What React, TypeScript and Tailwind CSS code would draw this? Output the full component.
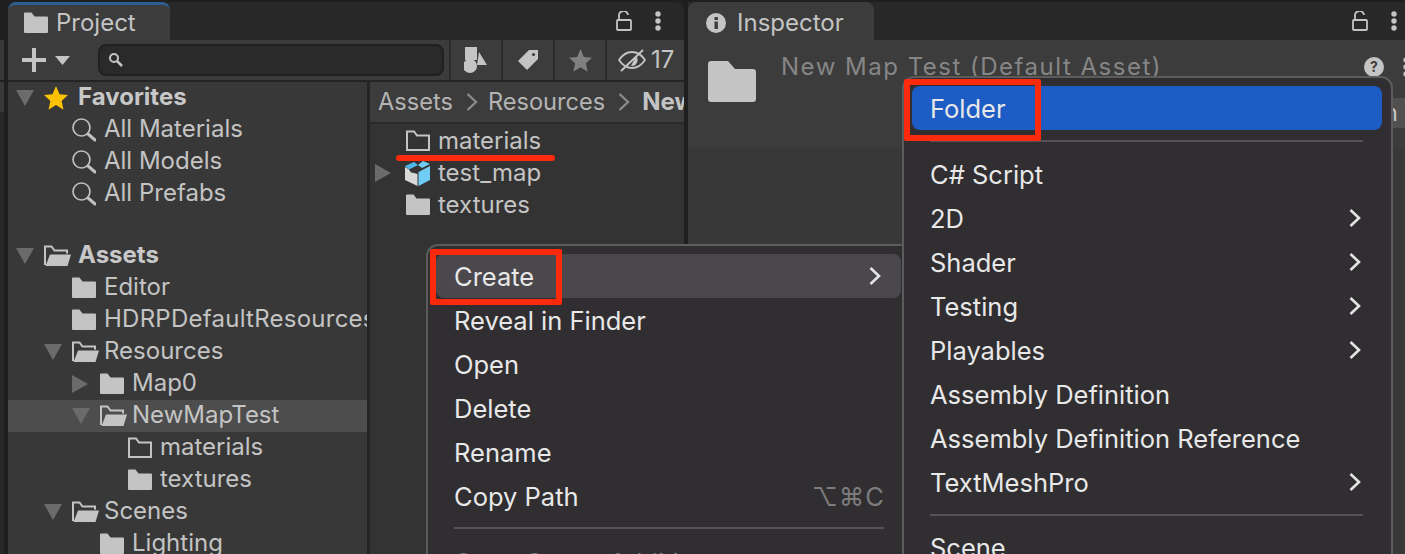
import React from "react";

function Folder({ size = 24 }: { size?: number }) {
  return (
    <svg width={size} height={size} viewBox="0 0 24 24" className="shrink-0">
      <path d="M0 2.500a1 1 0 0 1 1-1h6.500l3 4H23a1 1 0 0 1 1 1V21a1 1 0 0 1-1 1H1a1 1 0 0 1-1-1z" fill="#c4c4c4" />
    </svg>
  );
}
function FolderEmpty() {
  return (
    <svg width="24" height="24" viewBox="0 0 24 24" className="shrink-0">
      <path d="M1 21V2.500h7l3 4h12V21z" fill="none" stroke="#c4c4c4" strokeWidth="2" />
    </svg>
  );
}
function FolderOpen() {
  return (
    <svg width="27" height="24" viewBox="0 0 27 24" className="shrink-0">
      <path d="M1 21V2.500h6.500l3 4H23v3" fill="none" stroke="#c4c4c4" strokeWidth="2" />
      <path d="M1.500 22 6 10.500h21L23.500 22z" fill="#c4c4c4" />
    </svg>
  );
}
function TriDown() {
  return (
    <svg width="18" height="16" viewBox="0 0 18 16" className="shrink-0">
      <path d="M0 0h18L9 16z" fill="#6b6b6b" />
    </svg>
  );
}
function TriRight() {
  return (
    <svg width="16" height="18" viewBox="0 0 16 18" className="shrink-0">
      <path d="M0 0l16 9-16 9z" fill="#6b6b6b" />
    </svg>
  );
}
function Mag() {
  return (
    <svg width="24" height="24" viewBox="0 0 24 24" className="shrink-0">
      <circle cx="9.500" cy="9.500" r="8.500" fill="none" stroke="#c0c0c0" strokeWidth="1.700" />
      <path d="M16 16l7 6" stroke="#c0c0c0" strokeWidth="3" strokeLinecap="round" />
    </svg>
  );
}
function Star({ c, size }: { c: string; size: number }) {
  return (
    <svg width={size} height={size} viewBox="0 0 24 24" className="shrink-0">
      <path d="M12 0l3.500 8.300 8.500.8-6.400 5.800 1.900 8.800L12 19.100l-7.500 4.600 1.900-8.800L0 9.100l8.500-.8z" fill={c} />
    </svg>
  );
}
function Lock() {
  return (
    <svg width="16" height="20" viewBox="0 0 16 20">
      <path d="M3 8V5a4.500 4.500 0 0 1 9-1" fill="none" stroke="#c4c4c4" strokeWidth="1.800" />
      <rect x="1" y="9" width="14" height="10" rx="1" fill="none" stroke="#c4c4c4" strokeWidth="1.800" />
    </svg>
  );
}
function Dots() {
  return (
    <svg width="6" height="20" viewBox="0 0 6 20" className="shrink-0">
      <circle cx="3" cy="3" r="2.700" fill="#c4c4c4" />
      <circle cx="3" cy="10" r="2.700" fill="#c4c4c4" />
      <circle cx="3" cy="17" r="2.700" fill="#c4c4c4" />
    </svg>
  );
}
function Chevron() {
  return (
    <svg width="12" height="20" viewBox="0 0 12 20" className="shrink-0">
      <path d="M1.500 2l8.500 8-8.500 8" fill="none" stroke="#e4e4e4" strokeWidth="2.600" />
    </svg>
  );
}
function Crumb() {
  return (
    <svg width="12" height="20" viewBox="0 0 12 20" className="shrink-0 ml-[13px] mr-[10px]">
      <path d="M1.500 2l8.500 8-8.500 8" fill="none" stroke="#8a8a8a" strokeWidth="2.400" />
    </svg>
  );
}
function Box() {
  return (
    <svg width="27" height="26" viewBox="0 0 27 26" className="shrink-0">
      <path d="M1 6l9-4 4 3-9 4.500z" fill="#4fb6e8" />
      <path d="M14 5l5-4 7 3-8 4z" fill="#6fcdf5" />
      <path d="M1 7l4 2.500 2 3 3 .5 3.500 1V26L1 20z" fill="#d8d8d8" />
      <path d="M14.500 12l11.500-6v14l-11.500 6z" fill="#6fcdf5" />
    </svg>
  );
}

type R = { indent: number; tri?: "d" | "r"; icon: "f" | "e" | "o" | "m" | "s"; label: string; bold?: boolean; sel?: boolean; wide?: boolean };

function Row({ indent, tri, icon, label, bold, sel, wide }: R) {
  return (
    <div className={`flex h-8 items-center shrink-0 ${sel ? "bg-[#4d4d4d]" : ""}`} style={{ paddingLeft: indent }}>
      <div className="w-7 flex justify-start items-center shrink-0">
        {tri === "d" && <TriDown />}
        {tri === "r" && <TriRight />}
      </div>
      <div className={`flex items-center shrink-0 ${bold ? "w-[34px]" : "w-[32px]"}`}>
        {icon === "f" && <Folder />}
        {icon === "e" && <FolderEmpty />}
        {icon === "o" && <FolderOpen />}
        {icon === "m" && <Mag />}
        {icon === "s" && <Star c="#ffc107" size={24} />}
      </div>
      <span className={`whitespace-nowrap text-[24px] leading-8 pb-[2px] ${wide ? "tracking-[0.25px]" : ""} ${bold ? "font-bold text-[#c8c8c8]" : "text-[#c4c4c4]"}`}>{label}</span>
    </div>
  );
}

const tree: (R | null)[] = [
  { indent: 8, tri: "d", icon: "s", label: "Favorites", bold: true },
  { indent: 36, icon: "m", label: "All Materials" },
  { indent: 36, icon: "m", label: "All Models" },
  { indent: 36, icon: "m", label: "All Prefabs" },
  null,
  { indent: 8, tri: "d", icon: "o", label: "Assets", bold: true },
  { indent: 36, icon: "f", label: "Editor" },
  { indent: 36, icon: "f", label: "HDRPDefaultResources", wide: true },
  { indent: 36, tri: "d", icon: "o", label: "Resources" },
  { indent: 64, tri: "r", icon: "f", label: "Map0" },
  { indent: 64, tri: "d", icon: "o", label: "NewMapTest", sel: true },
  { indent: 92, icon: "e", label: "materials" },
  { indent: 92, icon: "f", label: "textures" },
  { indent: 36, tri: "d", icon: "o", label: "Scenes" },
  { indent: 64, icon: "f", label: "Lighting" },
];

function MenuItem({ label, arrow, hint, cls = "" }: { label: string; arrow?: boolean; hint?: string; cls?: string }) {
  return (
    <div className={`flex h-11 items-center justify-between rounded-lg ml-[8px] shrink-0 ${cls}`}>
      <span className="whitespace-nowrap text-[25.500px] text-[#e8e8e8] leading-none pt-[2px]">{label}</span>
      {arrow && <Chevron />}
      {hint && <span className="text-[25.500px] text-[#7c7c7c] leading-none tracking-[1px] pt-[2px]">{hint}</span>}
    </div>
  );
}

export default function App() {
  return (
    <div className="relative w-[1405px] h-[554px] overflow-hidden bg-[#1f1f1f] font-['Inter',sans-serif]">
      <div className="flex h-full pt-[2px]">
        <div className="w-[4px] shrink-0 flex flex-col mr-[4px]">
          <div className="h-[38px]" />
          <div className="h-[40px] bg-[#383838]" />
          <div className="h-[2px]" />
          <div className="h-[30px] bg-[#383838]" />
          <div className="flex-1 bg-[#282828]" />
        </div>
        {/* Project panel */}
        <div className="w-[676px] shrink-0 flex flex-col">
          <div className="h-[38px] bg-[#282828] flex items-stretch shrink-0 rounded-t-lg">
            <div className="w-[162px] bg-[#3c3c3c] border-t-[3px] border-[#2d5f93] rounded-t-lg flex items-center pl-4 gap-2">
              <Folder />
              <span className="text-[24px] text-[#c4c4c4]">Project</span>
            </div>
            <div className="ml-auto flex items-center gap-[23px] pr-[23px]">
              <Lock />
              <Dots />
            </div>
          </div>
          <div className="h-[40px] bg-[#3c3c3c] flex items-center shrink-0">
            <div className="w-[90px] flex items-center pl-[14px] gap-[9px] shrink-0">
              <svg width="24" height="24" viewBox="0 0 24 24"><path d="M10 0h4v10h10v4H14v10h-4V14H0v-4h10z" fill="#c4c4c4" /></svg>
              <svg width="15" height="9" viewBox="0 0 15 9"><path d="M0 0h15L7.500 9z" fill="#c4c4c4" /></svg>
            </div>
            <div className="w-[346px] h-8 rounded-lg bg-[#2a2a2a] border-2 border-[#212121] flex items-center pl-2 shrink-0">
              <svg width="16" height="16" viewBox="0 0 16 16"><circle cx="6" cy="6" r="4" fill="none" stroke="#c4c4c4" strokeWidth="2" /><path d="M9 9l5 5" stroke="#c4c4c4" strokeWidth="2.500" /></svg>
            </div>
            <div className="ml-[5px] w-[2px] h-full bg-[#2c2c2c] shrink-0" />
            <div className="w-[50px] h-full flex items-center justify-center shrink-0">
              <svg width="24" height="26" viewBox="0 0 24 26"><rect x="1" y="0" width="12" height="13" fill="#c4c4c4" /><circle cx="6" cy="19" r="7" fill="#c4c4c4" /><path d="M15 5l8 13h-10z" fill="#c4c4c4" /></svg>
            </div>
            <div className="w-[2px] h-full bg-[#2c2c2c] shrink-0" />
            <div className="w-[50px] h-full flex items-center justify-center shrink-0">
              <svg width="22" height="22" viewBox="0 0 22 22"><path d="M12 1h9v9L10 21 1 12z" fill="#c4c4c4" /><circle cx="16.500" cy="5.500" r="1.600" fill="#3c3c3c" /></svg>
            </div>
            <div className="w-[2px] h-full bg-[#2c2c2c] shrink-0" />
            <div className="w-[50px] h-full flex items-center justify-center shrink-0">
              <Star c="#808080" size={23} />
            </div>
            <div className="w-[2px] h-full bg-[#2c2c2c] shrink-0" />
            <div className="flex-1 h-full flex items-center pl-[11px] gap-[5px]">
              <svg width="28" height="26" viewBox="0 0 28 26" className="shrink-0">
                <path d="M1 13c4-6 8-8 13-8s9 2 13 8c-4 6-8 8-13 8S5 19 1 13z" fill="none" stroke="#c4c4c4" strokeWidth="1.800" />
                <path d="M18 9a6 6 0 0 1-5 10z" fill="#c4c4c4" />
                <path d="M3 24L25 3" stroke="#c4c4c4" strokeWidth="2" />
              </svg>
              <span className="text-[24px] text-[#c4c4c4] leading-none">17</span>
            </div>
          </div>
          <div className="h-[2px] bg-[#242424] shrink-0" />
          <div className="flex-1 flex min-h-0">
            <div className="w-[359px] shrink-0 bg-[#383838] flex flex-col overflow-hidden">
              {tree.map((t, i) => (t ? <Row key={i} {...t} /> : <div key={i} className="h-[26px] shrink-0 mb-[4px]" />))}
            </div>
            <div className="w-[3px] bg-[#242424] shrink-0" />
            <div className="flex-1 min-w-0 flex flex-col bg-[#333333]">
              <div className="h-10 bg-[#3c3c3c] flex items-center pl-[8px] overflow-hidden shrink-0">
                <span className="text-[23.600px] text-[#b4b4b4]">Assets</span>
                <Crumb />
                <span className="text-[23.600px] text-[#b4b4b4]">Resources</span>
                <Crumb />
                <span className="ml-[2px] text-[24px] font-bold text-[#c4c4c4] whitespace-nowrap">NewMapTest</span>
              </div>
              <div className="h-[2px] bg-[#2a2a2a] shrink-0" />
              <div className="flex flex-col pt-[1px]">
                <div className="flex h-8 items-center pl-[36px] gap-[8px]">
                  <FolderEmpty />
                  <span className="text-[24px] text-[#c4c4c4]">materials</span>
                </div>
                <div className="flex h-8 items-center pl-[5px]">
                  <TriRight />
                  <div className="ml-[13px] w-[34px]"><Box /></div>
                  <span className="text-[24px] text-[#c4c4c4]">test_map</span>
                </div>
                <div className="flex h-8 items-center pl-[36px] gap-[8px]">
                  <Folder />
                  <span className="text-[24px] text-[#c4c4c4]">textures</span>
                </div>
              </div>
            </div>
          </div>
        </div>
        <div className="w-1 shrink-0" />
        {/* Inspector */}
        <div className="flex-1 flex flex-col min-w-0">
          <div className="h-[38px] bg-[#282828] flex items-stretch shrink-0">
            <div className="w-[186px] bg-[#3c3c3c] rounded-t-lg flex items-center pl-[18px] pt-[3px] gap-[11px]">
              <svg width="20" height="20" viewBox="0 0 20 20"><circle cx="10" cy="10" r="10" fill="#c4c4c4" /><rect x="8.500" y="8.500" width="3.400" height="7.500" fill="#3c3c3c" /><rect x="8.500" y="4" width="3.400" height="3" fill="#3c3c3c" /></svg>
              <span className="text-[24px] text-[#c4c4c4]">Inspector</span>
            </div>
            <div className="ml-auto flex items-center gap-[23px] pr-[8px]">
              <Lock />
              <Dots />
            </div>
          </div>
          <div className="h-[108px] bg-[#3c3c3c] flex pl-[20px] pt-[21px] gap-[25px] shrink-0 overflow-hidden">
            <svg width="48" height="41" viewBox="0 0 48 41" className="shrink-0"><path d="M0 3a3 3 0 0 1 3-3h17l7 8h18a3 3 0 0 1 3 3v27a3 3 0 0 1-3 3H3a3 3 0 0 1-3-3z" fill="#c4c4c4" /></svg>
            <div className="flex flex-1 justify-between items-start min-w-0">
              <span className="text-[24px] text-[#868686] tracking-[1.500px] leading-none whitespace-nowrap -mt-[6px]">New Map Test (Default Asset)</span>
              <div className="flex flex-col items-end -mt-[4px] -mr-[4px] shrink-0">
                <div className="flex items-center gap-[19px]">
                  <svg width="20" height="20" viewBox="0 0 20 20"><circle cx="10" cy="10" r="10" fill="#c4c4c4" /><text x="10" y="15" textAnchor="middle" fontSize="14" fontWeight="700" fill="#3c3c3c" fontFamily="Inter">?</text></svg>
                  <Dots />
                </div>
                <div className="mt-[21px] h-[30px] w-[80px] rounded-l bg-[#505050] flex items-center justify-end pr-[11px]">
                  <span className="text-[24px] text-[#c4c4c4] leading-none">Open</span>
                </div>
              </div>
            </div>
          </div>
          <div className="flex-1 bg-[#383838]" />
        </div>
      </div>

      {/* Create context menu */}
      <div className="absolute left-[426px] top-[244px] w-[488px] h-[330px] rounded-t-xl bg-[#302e31] border-2 border-[#5c5c5c] flex flex-col pt-[8px] overflow-hidden">
        <MenuItem label="Create" arrow cls="bg-[#4a484c] pl-[18px] pr-[20px] mr-[11px]" />
        <MenuItem label="Reveal in Finder" cls="pl-[18px] mr-[11px]" />
        <MenuItem label="Open" cls="pl-[18px] mr-[11px]" />
        <MenuItem label="Delete" cls="pl-[18px] mr-[11px]" />
        <MenuItem label="Rename" cls="pl-[18px] mr-[11px]" />
        <MenuItem label="Copy Path" hint="⌥⌘C" cls="pl-[18px] pr-[16px] mr-[11px]" />
        <div className="h-[2px] bg-[#545256] ml-[26px] mr-[28px] mt-[9px] shrink-0" />
        <div className="mt-[11px] opacity-40"><MenuItem label="Open Scene Additive" cls="pl-[18px]" /></div>
      </div>

      {/* Sub menu */}
      <div className="absolute left-[902px] top-[76px] w-[491px] h-[500px] rounded-t-xl bg-[#302e31] border-2 border-[#5c5c5c] flex flex-col pt-[8px]">
        <MenuItem label="Folder" cls="bg-[#1d5cc5] pl-[18px] mr-[9px]" />
        <div className="h-[2px] bg-[#545256] ml-[26px] mr-[28px] mt-[10px] shrink-0" />
        <div className="mt-[10px] flex flex-col">
          <MenuItem label="C# Script" cls="pl-[18px] pr-[21px] mr-[9px]" />
          <MenuItem label="2D" arrow cls="pl-[18px] pr-[21px] mr-[9px]" />
          <MenuItem label="Shader" arrow cls="pl-[18px] pr-[21px] mr-[9px]" />
          <MenuItem label="Testing" arrow cls="pl-[18px] pr-[21px] mr-[9px]" />
          <MenuItem label="Playables" arrow cls="pl-[18px] pr-[21px] mr-[9px]" />
          <MenuItem label="Assembly Definition" cls="pl-[18px] pr-[21px] mr-[9px]" />
          <MenuItem label="Assembly Definition Reference" cls="pl-[18px] pr-[21px] mr-[9px]" />
          <MenuItem label="TextMeshPro" arrow cls="pl-[18px] pr-[21px] mr-[9px]" />
        </div>
        <div className="h-[2px] bg-[#545256] ml-[26px] mr-[28px] mt-[10px] shrink-0" />
        <div className="mt-[9px]"><MenuItem label="Scene" cls="pl-[18px] mr-[9px]" /></div>
      </div>

      {/* Annotation marks */}
      <div className="absolute left-[396px] top-[155px] w-[159px] h-[6px] rounded-full bg-[#fb2a0c]" />
      <div className="absolute left-[430px] top-[249px] w-[132px] h-[56px] border-[6px] border-[#fb2a0c] rounded-[2px]" />
      <div className="absolute left-[904px] top-[79px] w-[137px] h-[62px] border-[6px] border-[#fb2a0c] rounded-[2px]" />
    </div>
  );
}
